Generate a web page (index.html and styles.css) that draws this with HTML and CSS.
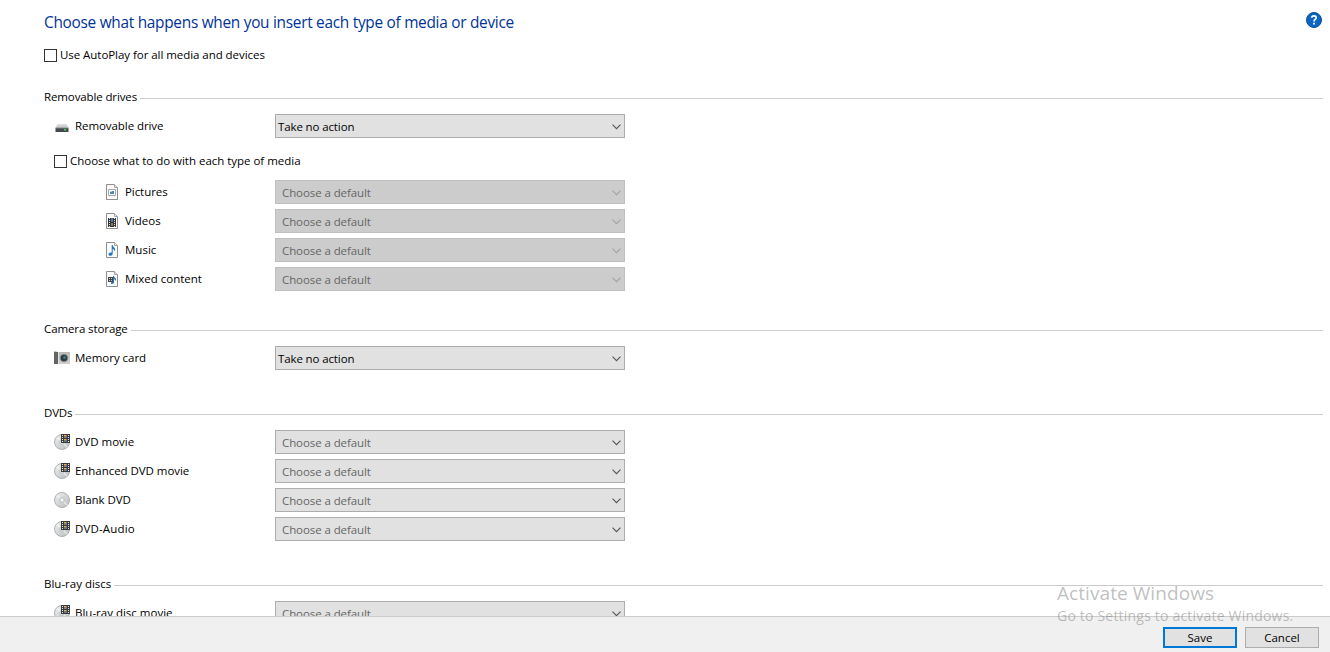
FILE: index.html
```
<!DOCTYPE html>
<html lang="en">
<head>
<meta charset="utf-8">
<title>AutoPlay</title>
<link rel="stylesheet" href="styles.css">
</head>
<body>
<svg class="defs" width="0" height="0">
  <defs>
    <linearGradient id="disc-fill" x1="0" y1="0" x2="1" y2="1"><stop offset="0" stop-color="#f1f3f3"/><stop offset=".5" stop-color="#d2d6d7"/><stop offset="1" stop-color="#b8bcbe"/></linearGradient>
    <linearGradient id="drive-top" x1="0" y1="0" x2="0" y2="1"><stop offset="0" stop-color="#e2e4e6"/><stop offset="1" stop-color="#b9bcbe"/></linearGradient>
    <linearGradient id="camera-body" x1="0" y1="0" x2="0" y2="1"><stop offset="0" stop-color="#b9b9b9"/><stop offset="1" stop-color="#cfcfcf"/></linearGradient>
    <symbol id="page" viewBox="0 0 16 16"><path d="M2.5.5h8l3 3v12h-11z" fill="#fafafa" stroke="#8f8f8f"/><path d="M10.5.5v3h3" fill="#e6e6e6" stroke="#a5a5a5"/></symbol>
    <symbol id="disc" viewBox="0 0 16 16"><circle cx="8" cy="8" r="7.5" fill="url(#disc-fill)" stroke="#adb1b3"/><path d="M3 3.5 7 7M9 9l4 4" stroke="#fff" stroke-width="1.4" opacity=".6"/><circle cx="8" cy="8" r="2.3" fill="#e9ecec" stroke="#b0b5b6" stroke-width=".8"/><circle cx="8" cy="8" r=".9" fill="#fff"/></symbol>
    <symbol id="film-disc" viewBox="0 0 16 16"><use href="#disc"/><path d="M7 0h9v9H7z" fill="#3a3a3a"/><path d="M8.500 1v8M14.500 1v8" stroke="#e4e4e4" stroke-dasharray="1 1"/><path d="M10 1h3v3h-3z" fill="#8a8460"/><path d="M10 1h2v1h-2z" fill="#e8b04a"/><path d="M12 2h1v2h-1z" fill="#3c7ed0"/><path d="M10 2h1v1h-1z" fill="#d0553c"/><path d="M10 5h3v3h-3z" fill="#77786a"/><path d="M10 5h2v1h-2z" fill="#e8b04a"/><path d="M12 6h1v2h-1z" fill="#4c7aa4"/></symbol>
    <symbol id="chevron" viewBox="0 0 9 6"><path d="M.5.7 4.5 4.7 8.5.7" fill="none" stroke="currentColor" stroke-width="1.1"/></symbol>
  </defs>
</svg>
<div class="window">
  <main class="content">
    <header class="top">
      <h1 class="title">Choose what happens when you insert each type of media or device</h1>
      <svg class="help" width="16" height="16" viewBox="0 0 16 16"><circle cx="8" cy="8" r="7.5" fill="#0b65c2" stroke="#0a4f94"/><path d="M5.8 5.8C5.8 3.2 10.2 3.2 10.2 5.8 10.2 7.5 8 7.4 8 9.4" fill="none" stroke="#fff" stroke-width="1.7"/><path d="M7.1 10.7h1.8v1.8H7.1z" fill="#fff"/></svg>
    </header>
    <label class="check check-all"><span class="box"></span><span class="t-all">Use AutoPlay for all media and devices</span></label>

    <section class="group removable">
      <h2 class="heading"><span class="t-removables">Removable drives</span></h2>
      <div class="row">
        <svg class="icon" width="16" height="16" viewBox="0 0 16 16"><path d="M3.5 6h9L14.500 10h-13z" fill="url(#drive-top)"/><path d="M1.500 10h13v4h-13z" fill="#45494b"/><path d="M1.500 10h13" stroke="#8a8d8f" stroke-width=".8"/><path d="M10 11h2v1.500h-2z" fill="#48dc50"/></svg>
        <span class="label t-removable">Removable drive</span>
        <div class="select chosen"><span>Take no action</span><svg class="arrow"><use href="#chevron"/></svg></div>
      </div>
      <label class="check check-each"><span class="box"></span><span class="t-each">Choose what to do with each type of media</span></label>
      <div class="row sub">
        <svg class="icon" width="16" height="16" viewBox="0 0 16 16"><use href="#page"/><path d="M4.5 5.5h7v6h-7z" fill="#fff" stroke="#a5a5a5"/><path d="M6 7h4v3H6z" fill="#4b88b5"/><path d="M6 7h2v1H6z" fill="#a9d1ea"/></svg>
        <span class="label t-pictures">Pictures</span>
        <div class="select disabled"><span>Choose a default</span><svg class="arrow"><use href="#chevron"/></svg></div>
      </div>
      <div class="row sub">
        <svg class="icon" width="16" height="16" viewBox="0 0 16 16"><use href="#page"/><path d="M4 5h8v9H4z" fill="#333"/><path d="M5.500 5v9M10.500 5v9" stroke="#e4e4e4" stroke-dasharray="1 1"/><path d="M7 5h2v4H7z" fill="#4e79a8"/><path d="M7 10h2v3H7z" fill="#8a7a58"/></svg>
        <span class="label t-videos">Videos</span>
        <div class="select disabled"><span>Choose a default</span><svg class="arrow"><use href="#chevron"/></svg></div>
      </div>
      <div class="row sub">
        <svg class="icon" width="16" height="16" viewBox="0 0 16 16"><use href="#page"/><path d="M7.700 3h1c.1 2 2.500 2.400 2.500 4.600 0 .9-.3 1.400-.7 2 .2-1.800-.8-2.400-1.800-2.700v4.600c0 1.300-1 2.300-2.400 2.300-1.100 0-1.800-.6-1.800-1.500 0-1.200 1.500-2.200 3.200-1.800z" fill="#2179bd"/></svg>
        <span class="label">Music</span>
        <div class="select disabled"><span>Choose a default</span><svg class="arrow"><use href="#chevron"/></svg></div>
      </div>
      <div class="row sub">
        <svg class="icon" width="16" height="16" viewBox="0 0 16 16"><use href="#page"/><path d="M4 6h5v5H4z" fill="#444"/><path d="M5 7h1v1H5zM7 7h1v1H7zM5 9h1v1H5zM7 9h1v1H7z" fill="#ccc"/><path d="M9 5h1c0 1.500 2 2 2 3.500 0 .8-.3 1.200-.6 1.600 0-1.200-.6-1.600-1.400-1.900V11c0 1.200-.8 2-1.800 2-.8 0-1.300-.4-1.300-1 0-.9 1-1.500 2.100-1.300z" fill="#2a74ad"/></svg>
        <span class="label">Mixed content</span>
        <div class="select disabled"><span>Choose a default</span><svg class="arrow"><use href="#chevron"/></svg></div>
      </div>
    </section>

    <section class="group camera">
      <h2 class="heading"><span class="t-camera">Camera storage</span></h2>
      <div class="row">
        <svg class="icon" width="16" height="16" viewBox="0 0 16 16"><path d="M0 1.500 4 2v12H0z" fill="#646464"/><path d="M4 2h12v12H4z" fill="url(#camera-body)"/><path d="M4.500 2v12" stroke="#e1e1e1"/><circle cx="10" cy="8" r="4.300" fill="#8d9496"/><circle cx="10" cy="8" r="3.300" fill="#303b42"/><circle cx="10.500" cy="7.500" r="1.300" fill="#3f8793"/></svg>
        <span class="label t-memory">Memory card</span>
        <div class="select chosen"><span>Take no action</span><svg class="arrow"><use href="#chevron"/></svg></div>
      </div>
    </section>

    <section class="group">
      <h2 class="heading"><span class="t-dvds">DVDs</span></h2>
      <div class="row">
        <svg class="icon" width="16" height="16"><use href="#film-disc"/></svg>
        <span class="label">DVD movie</span>
        <div class="select"><span>Choose a default</span><svg class="arrow"><use href="#chevron"/></svg></div>
      </div>
      <div class="row">
        <svg class="icon" width="16" height="16"><use href="#film-disc"/></svg>
        <span class="label t-enhanced">Enhanced DVD movie</span>
        <div class="select"><span>Choose a default</span><svg class="arrow"><use href="#chevron"/></svg></div>
      </div>
      <div class="row">
        <svg class="icon" width="16" height="16"><use href="#disc"/></svg>
        <span class="label t-blank">Blank DVD</span>
        <div class="select"><span>Choose a default</span><svg class="arrow"><use href="#chevron"/></svg></div>
      </div>
      <div class="row">
        <svg class="icon" width="16" height="16"><use href="#film-disc"/></svg>
        <span class="label t-audio">DVD-Audio</span>
        <div class="select"><span>Choose a default</span><svg class="arrow"><use href="#chevron"/></svg></div>
      </div>
    </section>

    <section class="group">
      <h2 class="heading"><span>Blu-ray discs</span></h2>
      <div class="row">
        <svg class="icon" width="16" height="16"><use href="#film-disc"/></svg>
        <span class="label">Blu-ray disc movie</span>
        <div class="select"><span>Choose a default</span><svg class="arrow"><use href="#chevron"/></svg></div>
      </div>
    </section>
  </main>
  <footer class="footer">
    <button class="btn primary">Save</button>
    <button class="btn">Cancel</button>
  </footer>
  <div class="watermark">
    <div class="wm-title">Activate Windows</div>
    <div class="wm-text">Go to Settings to activate Windows.</div>
  </div>
</div>
</body>
</html>
```
FILE: styles.css
```
* { box-sizing: border-box; }
body { margin: 0; background: #fff; color: #000; font: 11.5px/16px "Open Sans", "Noto Sans", sans-serif; }
.defs { position: absolute; }
.window { position: relative; display: flex; flex-direction: column; width: 1330px; height: 652px; overflow: hidden; }
.content { height: 616px; flex: none; overflow: hidden; padding: 12px 7px 0 44px; }
.top { display: flex; justify-content: space-between; align-items: flex-start; height: 36px; padding-right: 1px; }
.title { margin: 0; font-size: 15.4px; line-height: 21px; font-weight: 400; color: #003399; letter-spacing: -.28px; white-space: nowrap; }
.help { display: block; }
.check { display: flex; align-items: center; height: 14px; gap: 3px; white-space: nowrap; }
.box { width: 13px; height: 13px; border: 1px solid #333; background: #fff; margin-top: 1px; }
.check-all { margin-bottom: 26px; }
.check-each { margin: 16px 0 12px 10px; }
.group { margin-bottom: 34px; }
.removable { margin-bottom: 29px; }
.heading { display: flex; align-items: center; height: 21px; margin: 0 0 5px; font-size: 11.5px; font-weight: 400; gap: 3px; white-space: nowrap; }
.heading span { margin-top: -3px; }
.heading::after { content: ""; flex: 1; height: 1px; background: #cbcbcb; }
.row { display: flex; align-items: center; height: 24px; margin-bottom: 5px; padding-left: 10px; }
.row:last-child { margin-bottom: 0; }
.icon { flex: none; margin-right: 5px; }
.label { width: 200px; white-space: nowrap; }
.sub { padding-left: 60px; }
.sub .label { width: 150px; }
.t-all { letter-spacing: -.05px; }
.t-removables { letter-spacing: -.12px; }
.t-removable { letter-spacing: -.07px; }
.t-each { letter-spacing: -.02px; }
.t-pictures { letter-spacing: -.07px; }
.t-camera { letter-spacing: -.1px; }
.t-memory { letter-spacing: -.03px; }
.t-dvds { letter-spacing: -.18px; }
.t-enhanced { letter-spacing: -.05px; }
.t-blank { letter-spacing: -.05px; }
.t-audio { letter-spacing: .15px; }
.select { display: flex; align-items: center; justify-content: space-between; width: 350px; height: 24px; padding: 1px 3px 0 6px; border: 1px solid #adadad; background: #e1e1e1; color: #666; white-space: nowrap; letter-spacing: -.09px; }
.chosen { padding-left: 2px; color: #000; letter-spacing: -.12px; }
.disabled { border-color: #bfbfbf; background: #ccc; }
.arrow { width: 9px; height: 6px; color: #555; }
.disabled .arrow { color: #a3a3a3; }
.footer { display: flex; justify-content: flex-end; align-items: flex-start; gap: 8px; height: 36px; padding: 10px 11px 0 0; background: #f0f0f0; border-top: 1px solid #cbcbcb; }
.btn { width: 74px; height: 21px; padding: 0; border: 1px solid #adadad; background: #e1e1e1; font: inherit; line-height: 17px; color: #000; }
.primary { border: 2px solid #0078d7; }
.watermark { position: absolute; left: 1057px; top: 580px; color: rgba(120, 120, 120, .48); white-space: nowrap; }
.wm-title { font-size: 19px; line-height: 27px; letter-spacing: .07px; }
.wm-text { font-size: 14px; line-height: 18px; letter-spacing: .2px; }
```
